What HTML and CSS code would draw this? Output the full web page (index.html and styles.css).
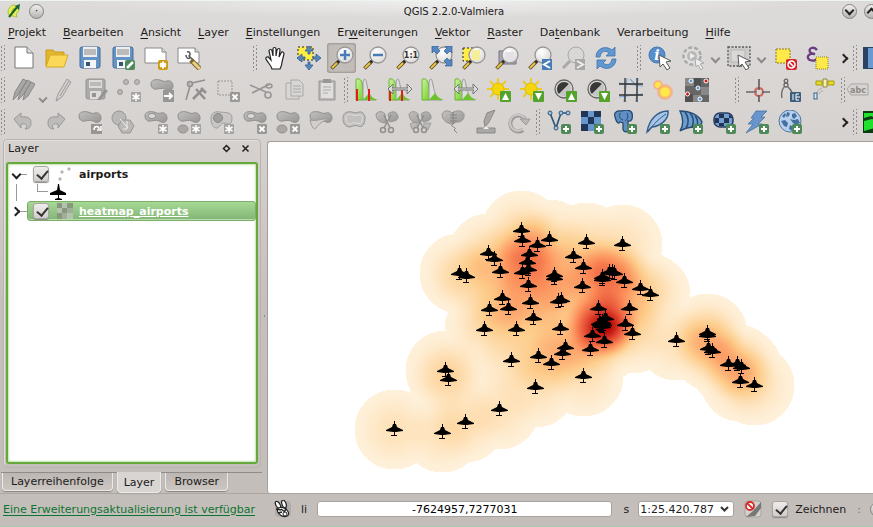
FILE: index.html
```html
<!DOCTYPE html>
<html lang="de">
<head>
    <meta charset="UTF-8">
    <meta name="viewport" content="width=device-width, initial-scale=1.0">
    <title>QGIS 2.2.0-Valmiera</title>
    <link rel="stylesheet" href="styles.css">
</head>
<body>

<!-- icon sprite -->
<svg class="sprite" width="0" height="0" aria-hidden="true">
    <defs>
        <linearGradient id="gGreen" x1="0" y1="0" x2="1" y2="1"><stop offset="0" stop-color="#cdf3a4"/><stop offset="1" stop-color="#6fd01c"/></linearGradient>
        <linearGradient id="gGrey" x1="0" y1="0" x2="1" y2="1"><stop offset="0" stop-color="#c2c0be"/><stop offset="1" stop-color="#989694"/></linearGradient>
        <radialGradient id="gGlass" cx=".4" cy=".3" r=".7"><stop offset="0" stop-color="#fff"/><stop offset="1" stop-color="#dddcda"/></radialGradient>
        <radialGradient id="gHeat"><stop offset=".5" stop-color="#ffe94a"/><stop offset=".7" stop-color="#fbb76a"/><stop offset="1" stop-color="#f4a08a" stop-opacity=".5"/></radialGradient>
    </defs>

    <!-- small parts shared by several icons -->
    <symbol id="b-plus" viewBox="0 0 24 24"><rect x="14" y="14" width="10" height="10" rx="2" fill="#4d8a57"/><path d="M19 16v6M16 19h6" stroke="#fff" stroke-width="2"/></symbol>
    <symbol id="b-star" viewBox="0 0 24 24"><rect x="14" y="14" width="10" height="10" rx="1" fill="#a5a3a1"/><path d="M19 15v8M15.500 17l7 4M22.500 17l-7 4" stroke="#fff" stroke-width="1.500"/></symbol>
    <symbol id="b-x" viewBox="0 0 24 24"><rect x="14" y="14" width="10" height="10" rx="1" fill="#9b9997"/><path d="M16.500 16.500l5 5M21.500 16.500l-5 5" stroke="#fff" stroke-width="1.800"/></symbol>
    <symbol id="b-up" viewBox="0 0 24 24"><rect x="13" y="13" width="11" height="11" rx="1" fill="#55a32a"/><path d="M18.500 15l3.500 7h-7z" fill="#fff"/></symbol>
    <symbol id="b-down" viewBox="0 0 24 24"><rect x="13" y="13" width="11" height="11" rx="1" fill="#55a32a"/><path d="M18.500 22l3.500-7h-7z" fill="#fff"/></symbol>
    <symbol id="blob" viewBox="0 0 24 24"><path d="M1 6C1 2 5 1 10 2c3 1 4 2 7 1 4-1 6 2 6 5 0 4-3 5-6 4-3-2-6-2-10-1C3 12 1 9 1 6z" fill="url(#gGrey)" stroke="#918f8d"/></symbol>
    <symbol id="lens" viewBox="0 0 24 24"><path d="M1.500 22.500l7-7" stroke="#53482c" stroke-width="3.500"/><path d="M2 22l5-5" stroke="#f1c540" stroke-width="2"/><path d="M8 16l2-2" stroke="#222" stroke-width="3"/><circle cx="15" cy="9" r="8" fill="url(#gGlass)" stroke="#989694" stroke-width="1.300"/></symbol>
    <symbol id="cursor" viewBox="0 0 24 24"><path d="M11 9l1 12 3-3 4 6 3-2-4-6 5-1z" fill="#fff" stroke="#555" stroke-width="1"/></symbol>

    <symbol id="logo" viewBox="0 0 16 16"><path d="M8 2C5 2 2 6 2 9c0 3 2 4 5 4 1 0 2 1 4 1l-1-3c2-1 3-4 3-6z" fill="#e6ef5c" stroke="#a9c02f"/><path d="M6 10c0-2 1-4 3-5" fill="none" stroke="#a9c02f" stroke-width="1.500"/><path d="M12 3L3 14" stroke="#17652d" stroke-width="2"/><path d="M14 1L9 3l4 4z" fill="#17652d"/></symbol>

    <!-- file -->
    <symbol id="new" viewBox="0 0 24 24"><path d="M3 1h12l6 6v15H3z" fill="#fff" stroke="#777"/><path d="M15 1v6h6" fill="#ddd" stroke="#777"/></symbol>
    <symbol id="open" viewBox="0 0 24 24"><path d="M1 20V4h7l2 2h9v5" fill="#e3b62c" stroke="#c89a1c"/><path d="M1 21L5 9h18l-4 12z" fill="#fcd858" stroke="#d8a827"/></symbol>
    <symbol id="save" viewBox="0 0 24 24"><rect x="2" y="1" width="20" height="21" rx="2" fill="#6493c8" stroke="#426b9b"/><path d="M5 1h14v10H5z" fill="#eee"/><path d="M6 4h12M6 6h12M6 8h12" stroke="#888"/><path d="M6 14h12v8H6z" fill="#f4f4f4"/><path d="M8 16h4v4H8z" fill="#31557f"/></symbol>
    <symbol id="saveas" viewBox="0 0 24 24"><use href="#save"/><rect x="14" y="14" width="10" height="10" rx="2" fill="#4d8a57"/><path d="M16 22l6-6" stroke="#fff" stroke-width="2.500"/></symbol>
    <symbol id="composer" viewBox="0 0 24 24"><path d="M1 2h17l4 4v11H1z" fill="#fff" stroke="#888"/><path d="M18 2v4h4" fill="#ddd" stroke="#888"/><rect x="14" y="14" width="10" height="10" rx="2" fill="#c99c14"/><path d="M19 15.500v7M16 17.500l6 3M22 17.500l-6 3" stroke="#fff" stroke-width="2"/></symbol>
    <symbol id="manager" viewBox="0 0 24 24"><path d="M1 2h17l4 4v11H1z" fill="#fff" stroke="#888"/><path d="M18 2v4h4" fill="#ddd" stroke="#888"/><path d="M10 6c3-1 4 2 2 4l4 4M9 9c0 3 2 4 4 3" fill="none" stroke="#555" stroke-width="1.500"/><path d="M14 14l9 9" stroke="#7b6430" stroke-width="5"/><path d="M16 16l7 7" stroke="#ecd084" stroke-width="3"/></symbol>

    <!-- navigation -->
    <symbol id="hand" viewBox="0 0 24 24"><path d="M8 23c-1-4-4-6-6-10-1-2 2-3 3-1l2 2L5 5c0-2 3-2 3 0l1 5V3c0-2 3-2 3 0v7l1-6c1-2 3-2 3 0l-1 7 2-4c1-2 3-1 3 1l-2 8c0 3-1 5-2 7z" fill="#fff" stroke="#222" stroke-width="1.200"/></symbol>
    <symbol id="pansel" viewBox="0 0 24 24"><rect x="1" y="1" width="15" height="13" fill="#ffec45" stroke="#222" stroke-dasharray="2 2"/><path d="M12 0l4 5h-3v3h-2V5H8zM12 24l4-5h-3v-3h-2v3H8zM0 12l5-4v3h3v2H5v3zM24 12l-5-4v3h-3v2h3v3z" fill="#5688c0" stroke="#315e93" stroke-width=".8"/></symbol>
    <symbol id="zin" viewBox="0 0 24 24"><use href="#lens"/><path d="M15 4v10M10 9h10" stroke="#4a7db8" stroke-width="2.500"/></symbol>
    <symbol id="zout" viewBox="0 0 24 24"><use href="#lens"/><path d="M10 9h10" stroke="#4a7db8" stroke-width="2.500"/></symbol>
    <symbol id="z11" viewBox="0 0 24 24"><use href="#lens"/><text x="15" y="12" text-anchor="middle" class="t-11">1:1</text></symbol>
    <symbol id="zfull" viewBox="0 0 24 24"><use href="#lens"/><path d="M3 0h7L8 2l3 3-3 3-3-3-2 2zM23 0h-7l2 2-3 3 3 3 3-3 2 2zM23 20h-7l2-2-3-3 3-3 3 3 2-2z" fill="#5688c0" stroke="#315e93" stroke-width=".7"/></symbol>
    <symbol id="zsel" viewBox="0 0 24 24"><rect x="1" y="2" width="14" height="13" fill="#ffec45" stroke="#222" stroke-dasharray="2 2"/><use href="#lens"/><path d="M9 4h9v10h-8z" fill="#f5ee9d"/></symbol>
    <symbol id="zlayer" viewBox="0 0 24 24"><path d="M4 5h17v13H4z" fill="#aaa6b7" stroke="#777287"/><use href="#lens"/><path d="M10 6h9v8h-9z" fill="#e3e1e7"/></symbol>
    <symbol id="zlast" viewBox="0 0 24 24"><use href="#lens"/><path d="M14 13h10v11H14z" fill="#467db7"/><path d="M22 15l-6 3.500 6 3.500" fill="none" stroke="#fff" stroke-width="2"/></symbol>
    <symbol id="znext" viewBox="0 0 24 24"><path d="M2 22l7-7" stroke="#aaa8a6" stroke-width="3"/><circle cx="15" cy="9" r="8" fill="#d9d7d5" stroke="#aaa8a6"/><path d="M14 13h10v11H14z" fill="#aaa8a6"/><path d="M16 15l6 3.500-6 3.500" fill="none" stroke="#eee" stroke-width="2"/></symbol>
    <symbol id="refresh" viewBox="0 0 24 24"><path d="M2 11C2 2 12-1 18 4l3-3v9h-9l3-3c-4-3-8-2-9 4z" fill="#6397cf" stroke="#3d73ad" stroke-width=".8"/><path d="M22 13c0 9-10 12-16 7l-3 3v-9h9l-3 3c4 3 8 2 9-4z" fill="#6397cf" stroke="#3d73ad" stroke-width=".8"/></symbol>

    <!-- attributes -->
    <symbol id="info" viewBox="0 0 24 24"><circle cx="9" cy="9" r="8" fill="#588ec9" stroke="#4379b3"/><text x="9" y="14" text-anchor="middle" class="t-info">i</text><use href="#cursor"/></symbol>
    <symbol id="action" viewBox="0 0 24 24"><circle cx="11" cy="10" r="8.500" fill="#ddd" stroke="#aaa" stroke-width="2.500" stroke-dasharray="4 2"/><circle cx="11" cy="10" r="5" fill="#bbb9b7"/><path d="M9 7l5 3-5 3z" fill="#eee"/><path d="M14 12l1 9 2-2 3 5 2-2-3-4 4-1z" fill="#eee" stroke="#aaa"/></symbol>
    <symbol id="select" viewBox="0 0 24 24"><rect x="1" y="1" width="22" height="19" fill="#cfcdcb" stroke="#555" stroke-width="1.300" stroke-dasharray="2 1.500"/><rect x="4" y="4" width="14" height="12" fill="#dad8d6" stroke="#b7b5b3"/><use href="#cursor"/></symbol>
    <symbol id="desel" viewBox="0 0 24 24"><rect x="3" y="3" width="14" height="14" fill="#ffe94a" stroke="#8e7f1d" stroke-dasharray="2 1"/><rect x="13" y="13" width="11" height="11" rx="2" fill="#d5262b"/><circle cx="18.500" cy="18.500" r="3.500" fill="none" stroke="#fff" stroke-width="1.500"/><path d="M16 16l5 5" stroke="#fff" stroke-width="1.500"/></symbol>
    <symbol id="expr" viewBox="0 0 24 24"><path d="M11 4C8 0 2 2 4 6c1 2 3 2 5 2-4-1-8 1-7 4s7 4 10 0" fill="none" stroke="#6b3c80" stroke-width="2.300"/><rect x="10" y="11" width="12" height="12" fill="#ffe94a" stroke="#8e7f1d" stroke-dasharray="1 1"/></symbol>
    <symbol id="table" viewBox="0 0 24 24"><path d="M0 1h24v22H0z" fill="#2a4264"/><path d="M5 2h19v20H5z" fill="#6b9ad2"/></symbol>

    <!-- digitizing -->
    <symbol id="pencils" viewBox="0 0 24 24"><path d="M1 22l2-8 8-13 4 2-9 14zM6 22l2-8 7-12 4 2-8 13zM11 22l2-8 6-10 4 2-7 12z" fill="#a9a7a5" stroke="#8b8987"/></symbol>
    <symbol id="pencil" viewBox="0 0 24 24"><path d="M5 23l2-7 9-15 4 3-9 15z" fill="#d0cecc" stroke="#a09e9c"/><path d="M9 18l9-15M5 23l3-2" stroke="#a09e9c"/></symbol>
    <symbol id="saveedit" viewBox="0 0 24 24"><rect x="2" y="1" width="19" height="20" rx="2" fill="#adabaa" stroke="#969492"/><path d="M5 2h13v8H5z" fill="#dedcda"/><path d="M6 5h11M6 7h11" stroke="#999"/><path d="M6 13h11v8H6z" fill="#dedcda"/><path d="M8 15h4v4H8zM13 22l8-11 3 2-8 9z" fill="#969492"/></symbol>
    <symbol id="addpt" viewBox="0 0 24 24"><g fill="#bbb9b7" stroke="#989694"><circle cx="9" cy="4" r="2.500"/><circle cx="20" cy="4" r="2.500"/><circle cx="3" cy="14" r="2.500"/></g><use href="#b-star"/></symbol>
    <symbol id="movef" viewBox="0 0 24 24"><use href="#blob"/><rect x="13" y="12" width="11" height="12" fill="#989694"/><path d="M14 18h8M19 15l3 3-3 3" fill="none" stroke="#fff" stroke-width="1.800"/></symbol>
    <symbol id="node" viewBox="0 0 24 24"><g fill="none" stroke="#92908e" stroke-width="1.500"><path d="M3 22L7 8M9 5l13-3"/><circle cx="7" cy="6" r="2.500" fill="#bbb"/><path d="M10 21l9-9M13 11l9 10M18 10l5 5" stroke-width="2.500"/></g></symbol>
    <symbol id="delsel" viewBox="0 0 24 24"><rect x="2" y="3" width="14" height="14" fill="none" stroke="#999795" stroke-dasharray="2 1"/><use href="#b-x"/></symbol>
    <symbol id="cut" viewBox="0 0 24 24"><g fill="none" stroke="#989694" stroke-width="1.600"><path d="M1 7l16 7M3 15l18-9"/><circle cx="19" cy="17" r="3"/><ellipse cx="20" cy="8" rx="3" ry="2"/></g></symbol>
    <symbol id="copy" viewBox="0 0 24 24"><g fill="#d9d7d5" stroke="#aaa8a6"><path d="M4 5h9l4 4v12H4z"/><path d="M9 2h8l4 4v12H9z"/><path d="M11 8h8M11 11h8M11 14h8"/></g></symbol>
    <symbol id="paste" viewBox="0 0 24 24"><path d="M4 3h16v19H4z" fill="#bbb9b7" stroke="#989694"/><path d="M6 5h12v15H6z" fill="#e1dfdd"/><path d="M8 1h8v4H8z" fill="#999795"/><path d="M8 9h8M8 12h8M8 15h5" stroke="#aaa"/></symbol>

    <!-- raster stretch -->
    <symbol id="hist" viewBox="0 0 24 24"><path d="M1 22V2q0-2 3-1c3 1 4 5 5 21z" fill="url(#gGreen)" stroke="#56a719" stroke-width=".8"/><path d="M8 22V5c1-6 3-5 4 2 2 10 4 14 9 15z" fill="#ddd" stroke="#999"/><path d="M8 22h15q-7-2-9-7z" fill="#6fc32a"/></symbol>
    <symbol id="histr" viewBox="0 0 24 24"><use href="#hist"/><path d="M2 11v12M14 11v12" stroke="#e81b1b" stroke-width="2"/></symbol>
    <symbol id="arrows" viewBox="0 0 24 24"><path d="M0 11l5-5v3l-1 1h16l-1-1V6l5 5-5 5v-3l1-1H4l1 1v3z" fill="#ddd" stroke="#777"/></symbol>
    <symbol id="histra" viewBox="0 0 24 24"><use href="#histr"/><use href="#arrows"/></symbol>
    <symbol id="hista" viewBox="0 0 24 24"><use href="#hist"/><use href="#arrows"/></symbol>
    <symbol id="sun" viewBox="0 0 24 24"><path d="M11 0v22M0 11h22M3 3l16 16M19 3L3 19" stroke="#ebcb22" stroke-width="1.800"/><circle cx="11" cy="11" r="6" fill="#f5d50c" stroke="#e1bd00"/></symbol>
    <symbol id="sunup" viewBox="0 0 24 24"><use href="#sun"/><use href="#b-up"/></symbol>
    <symbol id="sundown" viewBox="0 0 24 24"><use href="#sun"/><use href="#b-down"/></symbol>
    <symbol id="cont" viewBox="0 0 24 24"><circle cx="11" cy="11" r="9" fill="#d4d4d2" stroke="#666" stroke-width="1.300"/><path d="M16 6A7 7 0 1 0 6 16z" fill="#383838"/><path d="M16 6A7 7 0 0 1 6 16z" fill="#c4c4c2"/></symbol>
    <symbol id="contup" viewBox="0 0 24 24"><use href="#cont"/><use href="#b-up"/></symbol>
    <symbol id="contdown" viewBox="0 0 24 24"><use href="#cont"/><use href="#b-down"/></symbol>
    <symbol id="grid" viewBox="0 0 24 24"><path d="M8 0L5 24M19 0l-2 24M0 5l24 3M0 19l24-3M11 1l8 8" stroke="#79a5cd" stroke-width="1.200"/><path d="M6 0v24M18 0v24M0 6h24M0 17h24" stroke="#333" stroke-width="1.300"/></symbol>
    <symbol id="heat" viewBox="0 0 24 24"><circle cx="6" cy="7" r="5" fill="url(#gHeat)"/><circle cx="13" cy="14" r="8" fill="url(#gHeat)"/></symbol>
    <symbol id="interp" viewBox="0 0 24 24"><path d="M0 0h24v24H0z" fill="#666"/><path d="M0 0h9v8H0zM16 9h8v8h-8zM8 17h8v7H8z" fill="#888"/><path d="M9 0h7v9H9zM0 16h8v8H0z" fill="#505050"/><g stroke="#fff"><circle cx="6" cy="3" r="2" fill="#5a9ad3"/><circle cx="21" cy="3" r="2" fill="#d31414"/><circle cx="13" cy="10" r="2" fill="#5a9ad3"/><circle cx="2.500" cy="16" r="2" fill="#d31414"/><circle cx="15" cy="21" r="2" fill="#5a9ad3"/></g></symbol>
    <symbol id="cross" viewBox="0 0 24 24"><circle cx="13" cy="14" r="4" fill="none" stroke="#d2655e" stroke-width="2" stroke-dasharray="5 1.300"/><path d="M13 1v11M13 17v7M0 14h11M16 14h8" stroke="#333" stroke-width="1.200"/></symbol>
    <symbol id="capture" viewBox="0 0 24 24"><g fill="none" stroke="#666" stroke-width="1.300"><circle cx="7" cy="3" r="1.800"/><circle cx="7" cy="7" r="2"/><path d="M5 9c-2 3-3 7-2 11M9 9c3 3 4 4 4 7"/></g><rect x="11" y="14" width="11" height="10" rx="1" fill="#3c5f7e"/><path d="M14 16v6M20 16h-3v6h3M17 19h4" fill="none" stroke="#fff"/></symbol>
    <symbol id="gps" viewBox="0 0 24 24"><path d="M4 3h6v4H4zM16 3h6v4h-6z" fill="#e9da25" stroke="#a49a16"/><path d="M11 1h4v8h-4z" fill="#f6f1a5" stroke="#8d8840"/><path d="M10 10c-3 1-5 3-5 5M11 13c-2 0-3 1-4 3" fill="none" stroke="#aaa"/><rect x="2" y="15" width="3" height="6" fill="#d3eaf6" stroke="#396487"/></symbol>
    <symbol id="abc" viewBox="0 0 24 24"><path d="M0 11l4-5h17v11H4z" fill="#d6d4d2" stroke="#a7a5a3"/><text x="3" y="15" class="t-abc">abc</text></symbol>

    <!-- advanced digitizing -->
    <symbol id="undo" viewBox="0 0 24 24"><path d="M2 9l7-6v4c8-1 10 2 10 6 0 4-2 6-6 6 3-3 2-6-4-5v4z" fill="#bebcba" stroke="#9a9896"/></symbol>
    <symbol id="redo" viewBox="0 0 24 24"><path d="M20 9l-7-6v4C5 6 3 9 3 13c0 4 2 6 6 6-3-3-2-6 4-5v4z" fill="#bebcba" stroke="#9a9896"/></symbol>
    <symbol id="rotate" viewBox="0 0 24 24"><use href="#blob"/><path d="M13 14h11v10H13z" fill="#989694"/><path d="M16 20c0-5 5-4 5-1M19 20h4v-4" fill="none" stroke="#fff" stroke-width="1.500"/></symbol>
    <symbol id="simplify" viewBox="0 0 24 24"><g fill="#bbb9b7" stroke="#989694"><circle cx="8" cy="8" r="7"/><path d="M11 10h8l4 6-4 7h-8l-4-7z"/></g><path d="M9 9l8 9M16 11v8h-4" fill="none" stroke="#eee"/></symbol>
    <symbol id="ringadd" viewBox="0 0 24 24"><use href="#blob"/><ellipse cx="8" cy="6" rx="4" ry="2.500" fill="#dcdad8" stroke="#918f8d"/><use href="#b-star"/></symbol>
    <symbol id="partadd" viewBox="0 0 24 24"><use href="#blob"/><ellipse cx="6" cy="19" rx="5" ry="4" fill="#aaa8a6" stroke="#918f8d"/><use href="#b-star"/></symbol>
    <symbol id="fillring" viewBox="0 0 24 24"><path d="M1 8c0-5 4-7 9-6 4 1 12-1 12 6 0 8-4 6-8 5-4 0-5 6-8 5-4-1-5-5-5-10z" fill="#c9c7c5" stroke="#a09e9c"/><circle cx="8" cy="8" r="4.500" fill="#a09e9c" stroke="#8a8886"/><use href="#b-star"/></symbol>
    <symbol id="ringdel" viewBox="0 0 24 24"><use href="#blob"/><ellipse cx="8" cy="6" rx="4" ry="2.500" fill="#dcdad8" stroke="#918f8d"/><use href="#b-x"/></symbol>
    <symbol id="partdel" viewBox="0 0 24 24"><use href="#blob"/><ellipse cx="6" cy="19" rx="5" ry="4" fill="#aaa8a6" stroke="#918f8d"/><use href="#b-x"/></symbol>
    <symbol id="reshape" viewBox="0 0 24 24"><use href="#blob"/><path d="M1 10c8 2 12-3 20 0-5 0-9 1-14 8-3 3-5-4-6-8z" fill="#d2d0ce" stroke="#9d9b99"/></symbol>
    <symbol id="offset" viewBox="0 0 24 24"><path d="M1 8C1 3 5 1 10 2c3 1 4 1 7 0 4-1 6 3 6 6 0 7-3 10-7 8-3-1-5 0-8 1-5 0-7-4-7-9z" fill="#c2c0be" stroke="#999795"/><path d="M4 8c0-4 4-4 7-3 3 1 4 0 6 0 3-1 4 3 3 6s-3 3-6 2-5 1-7 1-3-3-3-6z" fill="none" stroke="#e2e0de"/></symbol>
    <symbol id="split" viewBox="0 0 24 24"><path d="M1 4c3-4 8-2 9 0l1 9c-7 0-10-4-10-9zM13 4c5-4 9-2 10 2s-3 5-8 6z" fill="url(#gGrey)" stroke="#989694"/><path d="M9 5l6 13M16 5L9 18" stroke="#918f8d" stroke-width="1.500"/><g fill="#d6d2cf" stroke="#918f8d" stroke-width="1.500"><circle cx="8" cy="20" r="2.500"/><circle cx="16" cy="20" r="2.500"/></g></symbol>
    <symbol id="splitp" viewBox="0 0 24 24"><path d="M2 14l6-3 2 7-6 1zM16 13h7l-3 7-5-1z" fill="#bbb9b7" stroke="#a4a2a0"/><use href="#split"/></symbol>
    <symbol id="merge" viewBox="0 0 24 24"><path d="M1 4c3-5 8-3 10-1 4-3 10-3 12 1 1 5-3 9-8 8l-3 2c-6 0-11-4-11-10z" fill="url(#gGrey)" stroke="#989694"/><path d="M12 2v12c-5 3 6 3 1 6l3 3M9 5h7M9 8h7M9 11h7" fill="none" stroke="#858381"/></symbol>
    <symbol id="mergea" viewBox="0 0 24 24"><path d="M10 11l3-8 8-3-6 12-4 5z" fill="#aaa8a6" stroke="#8a8886"/><path d="M3 18h18v5H3z" fill="#aaa8a6" stroke="#8a8886"/><path d="M9 19l3-3 3 3" fill="#eee"/></symbol>
    <symbol id="rotsym" viewBox="0 0 24 24"><path d="M16 20A8 8 0 1 1 18 9" fill="none" stroke="#9b9997" stroke-width="4"/><path d="M16 19A8 8 0 1 1 18 9" fill="none" stroke="#cac8c6" stroke-width="2"/><path d="M13 9h10l-4 6z" fill="#bab8b6" stroke="#9b9997"/></symbol>

    <!-- add layer -->
    <symbol id="vec" viewBox="0 0 24 24"><path d="M3 3l6 15 5-15h7" fill="none" stroke="#315879" stroke-width="1.700"/><g fill="#a7c4df" stroke="#315879"><circle cx="3" cy="3" r="2"/><circle cx="9" cy="18" r="2"/><circle cx="14" cy="3" r="2"/><circle cx="21" cy="3" r="2"/></g><use href="#b-plus"/></symbol>
    <symbol id="ras" viewBox="0 0 24 24"><path d="M1 1h20v20H1z" fill="#6797cd"/><path d="M1 1h7v6H1zM14 1h7v6h-7zM8 7h6v7H8zM1 14h7v7H1zM14 14h7v7h-7z" fill="#1f3659"/><use href="#b-plus"/></symbol>
    <symbol id="pg" viewBox="0 0 24 24"><path d="M2 3c2-3 5-2 7-2 2-1 8-2 10 2 1 5 0 9-4 8v9c-1 3-5 2-5-1v-6l-3-1c-1 2-3 1-4-2S1 5 2 3z" fill="#608fc4" stroke="#28496e" stroke-width="1.300"/><path d="M7 3c-1 4 0 6 3 7M14 3c2 4 0 7-2 8" fill="none" stroke="#28496e"/><use href="#b-plus"/></symbol>
    <symbol id="spatia" viewBox="0 0 24 24"><path d="M1 22C3 10 11 1 22 1c1 8-7 15-16 16z" fill="#a6c4e5" stroke="#335c89" stroke-width="1.400"/><path d="M2 22C8 13 14 8 20 4" fill="none" stroke="#335c89"/><use href="#b-plus"/></symbol>
    <symbol id="mssql" viewBox="0 0 24 24"><path d="M1 1c10 0 19 4 22 11-1 4-3 5-7 5-5 0-10 1-15 4 3-5 4-12 0-20z" fill="#6d9cce" stroke="#284c74" stroke-width="1.400"/><path d="M6 2c4 5 4 12 1 16M11 3c4 4 4 10 2 14M16 6c3 3 3 7 2 11" fill="none" stroke="#284c74" stroke-width="1.500"/><use href="#b-plus"/></symbol>
    <symbol id="ora" viewBox="0 0 24 24"><rect x="2" y="3" width="19" height="14" rx="6" fill="#779fd0" stroke="#243e61" stroke-width="1.500"/><path d="M7 4h5v4H7zM12 8h5v5h-5zM3 8h4v5H3zM7 13h5v3H7zM17 4l4 4h-4z" fill="#203657"/><use href="#b-plus"/></symbol>
    <symbol id="bolt" viewBox="0 0 24 24"><path d="M11 1h11l-6 6h4l-7 7h4L1 23l7-9H3l6-6H6z" fill="#6795cc" stroke="#4773a6" stroke-width=".8"/><use href="#b-plus"/></symbol>
    <symbol id="globe" viewBox="0 0 24 24"><circle cx="12" cy="11" r="11" fill="#b7d0ed" stroke="#54779e"/><path d="M4 6l3-3 1 2-2 3zM9 2l3 1-1 3-3 1zM14 4l3-1 2 3-3 3-2-2zM3 11l4-1 3 3-1 4-3-1zM12 9l4 1 4-1 2 4-4 2-3-2zM12 15l4 2-2 4-3-2z" fill="#46719e"/><use href="#b-plus"/></symbol>
    <symbol id="green" viewBox="0 0 24 24"><path d="M0 1h24v22H0z" fill="#0b3b12"/><path d="M1 3h23v4L14 9 8 6 1 8zM1 11l8-2 15 3v9h-9l-3-3-11 3z" fill="#21e12f"/></symbol>

    <symbol id="plane" viewBox="0 0 17 17"><path d="M8 0h1l1 6 6 3v2H9v3l3 1v1H5v-1l3-1v-3H0V9l7-3z"/></symbol>
    <symbol id="dots" viewBox="0 0 16 16"><g fill="#ddd" stroke="#999" stroke-width=".8"><circle cx="5" cy="6" r="1.200"/><circle cx="12" cy="3" r="1.200"/><circle cx="3" cy="13" r="1.200"/></g></symbol>
    <symbol id="raster" viewBox="0 0 16 16"><path d="M0 0h16v16H0z" fill="#b4c3ae"/><path d="M0 0h5v5H0zM10 0h6v5h-6zM5 5h5v5H5zM0 10h5v6H0z" fill="#87987f"/><path d="M10 5h6v5h-6zM5 10h5v6H5z" fill="#a0b098"/></symbol>
    <symbol id="mouse" viewBox="0 0 18 18"><rect x="1" y="1" width="16" height="16" rx="4" fill="#b1ada9"/><g fill="#fff" stroke="#222" stroke-width="1.200"><ellipse cx="4" cy="5" rx="2" ry="4" transform="rotate(-30 4 5)"/><ellipse cx="10" cy="4" rx="2" ry="4" transform="rotate(-20 10 4)"/><ellipse cx="9" cy="12" rx="6" ry="4" transform="rotate(30 9 12)"/></g><path d="M2 9l5 1M7 9l4 3M12 8l-1 3M4 13l4-1" stroke="#222" stroke-width="1.500"/><circle cx="11" cy="14" r="2" fill="#fff" stroke="#222"/></symbol>
    <symbol id="norender" viewBox="0 0 18 18"><rect x="1" y="1" width="16" height="16" rx="3" fill="#d4d0cc" stroke="#aaa5a0"/><path d="M17 2L9 11l-7 6 9-1 6-8z" fill="#777"/><circle cx="6" cy="6" r="4" fill="#fff" stroke="#d42a2a" stroke-width="1.800"/><path d="M3 3l6 6" stroke="#d42a2a" stroke-width="1.800"/></symbol>
</svg>

<header class="titlebar">
    <svg class="logo"><use href="#logo"/></svg>
    <button class="round" aria-label="Fenstermenü">·</button>
    <h1>QGIS 2.2.0-Valmiera</h1>
    <button class="round chev-down" aria-label="Minimieren"></button>
    <button class="round chev-up" aria-label="Maximieren"></button>
</header>

<nav class="menubar">
    <a href="#"><u>P</u>rojekt</a>
    <a href="#"><u>B</u>earbeiten</a>
    <a href="#"><u>A</u>nsicht</a>
    <a href="#"><u>L</u>ayer</a>
    <a href="#"><u>E</u>instellungen</a>
    <a href="#">Er<u>w</u>eiterungen</a>
    <a href="#"><u>V</u>ektor</a>
    <a href="#"><u>R</u>aster</a>
    <a href="#">Da<u>t</u>enbank</a>
    <a href="#">Verarbeitung</a>
    <a href="#"><u>H</u>ilfe</a>
</nav>

<div class="toolbars">
    <div class="row">
        <div class="toolbar spaced">
            <button class="tool" aria-label="Neu"><svg><use href="#new"/></svg></button>
            <button class="tool" aria-label="Öffnen"><svg><use href="#open"/></svg></button>
            <button class="tool" aria-label="Speichern"><svg><use href="#save"/></svg></button>
            <button class="tool" aria-label="Speichern als"><svg><use href="#saveas"/></svg></button>
            <button class="tool" aria-label="Neue Druckzusammenstellung"><svg><use href="#composer"/></svg></button>
            <button class="tool" aria-label="Druckzusammenstellungen"><svg><use href="#manager"/></svg></button>
        </div>
        <div class="toolbar ends">
            <button class="tool" aria-label="Karte verschieben"><svg><use href="#hand"/></svg></button>
            <button class="tool" aria-label="Zur Auswahl verschieben"><svg><use href="#pansel"/></svg></button>
            <button class="tool active" aria-label="Hineinzoomen"><svg><use href="#zin"/></svg></button>
            <button class="tool" aria-label="Hinauszoomen"><svg><use href="#zout"/></svg></button>
            <button class="tool" aria-label="Auf native Auflösung zoomen"><svg><use href="#z11"/></svg></button>
            <button class="tool" aria-label="Volle Ausdehnung"><svg><use href="#zfull"/></svg></button>
            <button class="tool" aria-label="Auf Auswahl zoomen"><svg><use href="#zsel"/></svg></button>
            <button class="tool" aria-label="Auf Layer zoomen"><svg><use href="#zlayer"/></svg></button>
            <button class="tool" aria-label="Zoom zurück"><svg><use href="#zlast"/></svg></button>
            <button class="tool" aria-label="Zoom vor" disabled><svg><use href="#znext"/></svg></button>
            <button class="tool" aria-label="Aktualisieren"><svg><use href="#refresh"/></svg></button>
        </div>
        <div class="toolbar fill">
            <button class="tool" aria-label="Objekte abfragen"><svg><use href="#info"/></svg></button>
            <button class="tool" aria-label="Aktion ausführen" disabled><svg><use href="#action"/></svg></button>
            <button class="drop" aria-label="Aktionen"></button>
            <button class="tool" aria-label="Objekte wählen"><svg><use href="#select"/></svg></button>
            <button class="drop" aria-label="Auswahlarten"></button>
            <button class="tool" aria-label="Auswahl aufheben"><svg><use href="#desel"/></svg></button>
            <button class="tool" aria-label="Nach Ausdruck wählen"><svg><use href="#expr"/></svg></button>
            <button class="more" aria-label="Mehr"></button>
        </div>
        <div class="toolbar last">
            <button class="tool" aria-label="Attributtabelle"><svg><use href="#table"/></svg></button>
        </div>
    </div>

    <div class="row">
        <div class="toolbar">
            <button class="tool" aria-label="Aktuelle Änderungen"><svg><use href="#pencils"/></svg></button>
            <button class="drop tight" aria-label="Änderungen"></button>
            <button class="tool" aria-label="Bearbeitungsstatus"><svg><use href="#pencil"/></svg></button>
            <button class="tool" aria-label="Layeränderungen speichern"><svg><use href="#saveedit"/></svg></button>
            <button class="tool" aria-label="Objekt hinzufügen"><svg><use href="#addpt"/></svg></button>
            <button class="tool" aria-label="Objekt verschieben"><svg><use href="#movef"/></svg></button>
            <button class="tool" aria-label="Knotenwerkzeug"><svg><use href="#node"/></svg></button>
            <button class="tool" aria-label="Ausgewähltes löschen"><svg><use href="#delsel"/></svg></button>
            <button class="tool" aria-label="Ausschneiden"><svg><use href="#cut"/></svg></button>
            <button class="tool" aria-label="Kopieren"><svg><use href="#copy"/></svg></button>
            <button class="tool" aria-label="Einfügen"><svg><use href="#paste"/></svg></button>
        </div>
        <div class="toolbar fill">
            <button class="tool" aria-label="Lokale Kumulation"><svg><use href="#histr"/></svg></button>
            <button class="tool" aria-label="Volle Kumulation"><svg><use href="#histra"/></svg></button>
            <button class="tool" aria-label="Lokale Streckung"><svg><use href="#hist"/></svg></button>
            <button class="tool" aria-label="Volle Streckung"><svg><use href="#hista"/></svg></button>
            <button class="tool" aria-label="Helligkeit erhöhen"><svg><use href="#sunup"/></svg></button>
            <button class="tool" aria-label="Helligkeit verringern"><svg><use href="#sundown"/></svg></button>
            <button class="tool" aria-label="Kontrast erhöhen"><svg><use href="#contup"/></svg></button>
            <button class="tool" aria-label="Kontrast verringern"><svg><use href="#contdown"/></svg></button>
            <button class="tool" aria-label="Georeferenzierung"><svg><use href="#grid"/></svg></button>
            <button class="tool" aria-label="Heatmap"><svg><use href="#heat"/></svg></button>
            <button class="tool" aria-label="Interpolation"><svg><use href="#interp"/></svg></button>
        </div>
        <div class="toolbar">
            <button class="tool" aria-label="Koordinaten"><svg><use href="#cross"/></svg></button>
            <button class="tool" aria-label="Koordinatenerfassung"><svg><use href="#capture"/></svg></button>
            <button class="tool" aria-label="GPS"><svg><use href="#gps"/></svg></button>
        </div>
        <div class="toolbar wide">
            <button class="tool" aria-label="Beschriftung"><svg><use href="#abc"/></svg></button>
        </div>
    </div>

    <div class="row">
        <div class="toolbar">
            <button class="tool" aria-label="Rückgängig"><svg><use href="#undo"/></svg></button>
            <button class="tool" aria-label="Wiederholen"><svg><use href="#redo"/></svg></button>
            <button class="tool" aria-label="Objekte drehen"><svg><use href="#rotate"/></svg></button>
            <button class="tool" aria-label="Vereinfachen"><svg><use href="#simplify"/></svg></button>
            <button class="tool" aria-label="Ring hinzufügen"><svg><use href="#ringadd"/></svg></button>
            <button class="tool" aria-label="Teil hinzufügen"><svg><use href="#partadd"/></svg></button>
            <button class="tool" aria-label="Ring füllen"><svg><use href="#fillring"/></svg></button>
            <button class="tool" aria-label="Ring löschen"><svg><use href="#ringdel"/></svg></button>
            <button class="tool" aria-label="Teil löschen"><svg><use href="#partdel"/></svg></button>
            <button class="tool" aria-label="Überarbeiten"><svg><use href="#reshape"/></svg></button>
            <button class="tool" aria-label="Linie versetzen"><svg><use href="#offset"/></svg></button>
            <button class="tool" aria-label="Objekte trennen"><svg><use href="#split"/></svg></button>
            <button class="tool" aria-label="Teile trennen"><svg><use href="#splitp"/></svg></button>
            <button class="tool" aria-label="Verschmelzen"><svg><use href="#merge"/></svg></button>
            <button class="tool" aria-label="Attribute vereinigen"><svg><use href="#mergea"/></svg></button>
            <button class="tool" aria-label="Symbole drehen"><svg><use href="#rotsym"/></svg></button>
        </div>
        <div class="toolbar fill">
            <button class="tool" aria-label="Vektorlayer"><svg><use href="#vec"/></svg></button>
            <button class="tool" aria-label="Rasterlayer"><svg><use href="#ras"/></svg></button>
            <button class="tool" aria-label="PostGIS"><svg><use href="#pg"/></svg></button>
            <button class="tool" aria-label="SpatiaLite"><svg><use href="#spatia"/></svg></button>
            <button class="tool" aria-label="MSSQL"><svg><use href="#mssql"/></svg></button>
            <button class="tool" aria-label="Oracle"><svg><use href="#ora"/></svg></button>
            <button class="tool" aria-label="SQL Anywhere"><svg><use href="#bolt"/></svg></button>
            <button class="tool" aria-label="WMS"><svg><use href="#globe"/></svg></button>
            <button class="more" aria-label="Mehr"></button>
        </div>
        <div class="toolbar last">
            <button class="tool" aria-label="GRASS"><svg><use href="#green"/></svg></button>
        </div>
    </div>
</div>

<main class="workspace">
    <aside class="dock">
        <section class="panel">
            <div class="panel-head">
                <h2>Layer</h2>
                <button aria-label="Abdocken"><svg viewBox="0 0 9 9"><path d="M4.500 1.500l3 3-3 3-3-3z"/></svg></button>
                <button aria-label="Schließen"><svg viewBox="0 0 9 9"><path d="M1.500 1.500l6 6M7.500 1.500l-6 6"/></svg></button>
            </div>
            <ul class="tree">
                <li class="layer">
                    <span class="branch open"></span>
                    <input type="checkbox" id="lyrAirports" checked>
                    <svg><use href="#dots"/></svg>
                    <label for="lyrAirports">airports</label>
                </li>
                <li class="symbol"><span class="elbow"></span><svg><use href="#plane"/></svg></li>
                <li class="layer">
                    <span class="branch"></span>
                    <div class="selected">
                        <input type="checkbox" id="lyrHeatmap" checked>
                        <svg><use href="#raster"/></svg>
                        <label for="lyrHeatmap">heatmap_airports</label>
                    </div>
                </li>
            </ul>
        </section>
        <div class="tabs">
            <button class="tab">Layerreihenfolge</button>
            <button class="tab current">Layer</button>
            <button class="tab">Browser</button>
        </div>
    </aside>
    <div class="splitter"></div>
    <div class="map" id="map"><canvas id="mapCanvas"></canvas></div>
</main>

<footer class="statusbar">
    <a href="#">Eine Erweiterungsaktualisierung ist verfügbar</a>
    <button class="mini" aria-label="Ausdehnung umschalten"><svg><use href="#mouse"/></svg></button>
    <label class="coord-label" for="coords">li</label>
    <input type="text" id="coords" value="-7624957,7277031">
    <label class="scale-label" for="scale">s</label>
    <select id="scale"><option>1:25.420.787</option></select>
    <button class="mini" aria-label="Zeichnen abbrechen"><svg><use href="#norender"/></svg></button>
    <input type="checkbox" id="render" checked>
    <label for="render">Zeichnen</label>
    <span class="dots">:</span>
    <button class="round" aria-label="Projektion"></button>
</footer>

<script src="map.js"></script>
</body>
</html>
```

FILE: styles.css
```css
* {
    box-sizing: border-box;
}
body {
    margin: 0;
    height: 100vh;
    display: flex;
    flex-direction: column;
    overflow: hidden;
    font-family: 'DejaVu Sans', sans-serif;
    font-size: 11px;
    color: #1c1b1a;
    background: linear-gradient(#dddbda, #d6d2d0 140px, #c6c0bc 300px, #c4beba);
    border-top: 1px solid #eef4ee;
    border-bottom: 1px solid #a5cbae;
}
button {
    border: none;
    padding: 0;
    background: none;
    font: inherit;
    color: inherit;
}
.sprite {
    position: absolute;
}
.t-11 {
    font: bold 8px 'DejaVu Sans', sans-serif;
    fill: #333;
}
.t-info {
    font: italic bold 14px 'DejaVu Serif', serif;
    fill: #fff;
}
.t-abc {
    font: bold 8px 'DejaVu Sans', sans-serif;
    fill: #8c8a88;
}

/* title and menu */
.titlebar {
    display: flex;
    align-items: center;
    gap: 7px;
    height: 20px;
    flex: none;
    padding-left: 6px;
    background: radial-gradient(ellipse at 50% 0, #eeeeee, rgba(238, 238, 238, 0) 60%);
}
.titlebar h1 {
    flex: 1;
    margin: 0;
    padding-left: 22px;
    text-align: center;
    font-size: 10px;
    font-weight: normal;
}
.logo {
    width: 16px;
    height: 16px;
}
.round {
    width: 15px;
    height: 15px;
    flex: none;
    border: 1px solid #858381;
    border-radius: 50%;
    background: linear-gradient(#f0f0ef, #b5b3b1);
    line-height: 12px;
    display: flex;
    align-items: center;
    justify-content: center;
}
.chev-down::before, .chev-up::before {
    content: "";
    width: 5px;
    height: 5px;
    border: solid #222;
    border-width: 0 2px 2px 0;
    transform: translateY(-1px) rotate(45deg);
}
.chev-up::before {
    transform: translateY(1px) rotate(225deg);
}
.chev-up {
    margin-right: -6px;
}
.menubar {
    display: flex;
    gap: 17px;
    height: 21px;
    flex: none;
    align-items: center;
    padding: 2px 0 0 8px;
}
.menubar a {
    color: inherit;
    text-decoration: none;
}
.menubar u {
    text-underline-offset: 2px;
}

/* toolbars */
.toolbars {
    flex: none;
}
.row {
    display: flex;
    height: 32px;
    overflow: hidden;
}
.toolbar {
    display: flex;
    flex: none;
    align-items: center;
}
.toolbar::before {
    content: "";
    width: 6px;
    height: 26px;
    flex: none;
    margin-right: 1px;
    background:
        radial-gradient(circle, #8e8b88 1px, transparent 1px) 0 0 / 3px 4px repeat-y,
        radial-gradient(circle, #8e8b88 1px, transparent 1px) 3px 2px / 3px 4px repeat-y;
}
.spaced {
    padding-right: 47px;
}
.ends {
    padding-right: 14px;
}
.fill {
    flex: 1 0 auto;
}
.last {
    width: 21px;
}
.wide {
    width: 33px;
}
.last .tool, .wide .tool {
    justify-content: flex-start;
}
.last .tool {
    padding-left: 4px;
}
.tool {
    width: 33px;
    height: 30px;
    flex: none;
    display: flex;
    align-items: center;
    justify-content: center;
}
.tool svg {
    width: 24px;
    height: 24px;
    flex: none;
    overflow: visible;
}
.active {
    background: #c2bdb9;
    box-shadow: inset 0 0 2px 1px #9b9692;
    border-radius: 3px;
    width: 29px;
    margin: 0 2px;
}
.drop {
    width: 13px;
    height: 24px;
    display: flex;
    align-items: center;
    justify-content: center;
}
.drop::before {
    content: "";
    width: 5px;
    height: 5px;
    border: solid #8d8a87;
    border-width: 0 2px 2px 0;
    transform: rotate(45deg);
}
.tight {
    width: 6px;
    align-items: flex-end;
}
.more {
    margin-left: auto;
    padding-right: 5px;
}
.more::before {
    content: "";
    display: block;
    width: 5px;
    height: 5px;
    border: solid #222;
    border-width: 2px 2px 0 0;
    transform: rotate(45deg);
}

/* layer dock */
.workspace {
    flex: 1;
    min-height: 0;
    display: flex;
}
.dock {
    width: 262px;
    flex: none;
    display: flex;
    flex-direction: column;
}
.panel {
    flex: 1;
    min-height: 0;
    margin: 1px 1px 4px 3px;
    padding: 0 2px 3px;
    border: 1px solid #b9b4b0;
    border-radius: 4px;
    box-shadow: inset 1px 1px #e2dfdd;
    display: flex;
    flex-direction: column;
}
.panel-head {
    height: 22px;
    flex: none;
    display: flex;
    align-items: center;
    gap: 10px;
    padding: 0 8px 6px 2px;
}
.panel-head h2 {
    flex: 1;
    margin: 0;
    font-size: 11px;
    font-weight: normal;
}
.panel-head button, .panel-head svg {
    width: 9px;
    height: 9px;
    display: block;
}
.panel-head path {
    fill: none;
    stroke: #222;
    stroke-width: 1.5;
}
.tree {
    flex: 1;
    margin: 0;
    padding: 0 0 0 4px;
    list-style: none;
    background: #fff;
    border: 2px solid #65a83c;
    border-radius: 3px;
    box-shadow: inset 0 0 2px 1px #c4e3b0;
    font-weight: bold;
}
.layer, .selected {
    display: flex;
    align-items: center;
    height: 20px;
}
.layer input {
    margin-left: 6px;
    margin-right: 8px;
}
.selected {
    flex: 1;
    border: 1px solid #7cb069;
    border-radius: 3px;
    background: linear-gradient(#a5d994, #83b477);
    box-shadow: inset 0 -1px #b7deaa;
    color: #fff;
    text-decoration: underline;
}
.selected input {
    margin-left: 5px;
}
.layer svg {
    width: 16px;
    height: 16px;
    margin-right: 6px;
}
.branch {
    width: 15px;
    height: 20px;
    display: flex;
    align-items: center;
    background: linear-gradient(#999, #999) 9px 10px / 6px 1px no-repeat;
}
.branch::before {
    content: "";
    width: 5px;
    height: 5px;
    border: solid #222;
    border-width: 2px 2px 0 0;
    transform: rotate(45deg);
}
.branch.open::before {
    margin-left: 1px;
    transform: rotate(135deg);
}
.symbol {
    display: flex;
    height: 17px;
    margin-left: 4px;
    border-left: 1px solid #999;
}
.symbol svg {
    width: 17px;
    height: 17px;
    margin-left: 2px;
}
.elbow {
    width: 11px;
    height: 8px;
    margin-left: 20px;
    border-left: 1px solid #999;
    border-bottom: 1px solid #999;
}
input[type="checkbox"] {
    appearance: none;
    width: 16px;
    height: 16px;
    flex: none;
    margin-top: 0;
    margin-bottom: 0;
    border: 1px solid #aaa6a2;
    border-radius: 3px;
    background: linear-gradient(#efedec, #d2cecb);
    box-shadow: 0 1px 1px #8a8785;
}
input[type="checkbox"]:checked::before {
    content: "";
    display: block;
    width: 5px;
    height: 9px;
    margin: 1px 0 0 5px;
    border: solid #333;
    border-width: 0 2px 2px 0;
    transform: rotate(40deg);
}
.tabs {
    height: 20px;
    margin: 0 0 1px 1px;
    flex: none;
    display: flex;
    gap: 4px;
    padding-left: 1px;
    border-top: 1px solid #8f8b88;
}
.tab {
    height: 18px;
    padding: 0 8px;
    border: 1px solid #eceae8;
    border-top: none;
    border-radius: 0 0 4px 4px;
    background: linear-gradient(#bcb7b3, #cbc6c2);
    box-shadow: 0 1px 1px #85817e;
}
.tab.current {
    height: 21px;
    padding: 0 6px;
    margin-top: -1px;
    background: #d9d5d2;
}
.splitter {
    width: 5px;
    flex: none;
    background: radial-gradient(circle, #8e8b88 1px, transparent 1px) center / 3px 4px no-repeat;
}
.map {
    flex: 1;
    min-width: 0;
    margin-top: 3px;
    overflow: hidden;
    background: #fff;
    border: solid #a39e9a;
    border-width: 1px 0 0 1px;
    border-radius: 3px 0 0 3px;
}
.map canvas {
    display: block;
}

/* status bar */
.statusbar {
    height: 33px;
    flex: none;
    display: flex;
    align-items: center;
    padding: 0 0 2px 3px;
    border-top: 1px solid #aca7a3;
    overflow: hidden;
    white-space: nowrap;
}
.statusbar a {
    width: 261px;
    flex: none;
    color: #0c7431;
    text-underline-offset: 2px;
}
.mini, .mini svg {
    width: 18px;
    height: 18px;
    flex: none;
    display: block;
}
.mini {
    margin-left: 10px;
}
.coord-label {
    margin: 0 10px 0 9px;
}
.statusbar input[type="text"] {
    flex: 1;
    min-width: 0;
    height: 16px;
    padding: 0;
    text-align: center;
    font: inherit;
    border: 1px solid #a8a39f;
    border-radius: 3px;
    background: #fff;
}
.scale-label {
    margin: 0 9px 0 11px;
}
.statusbar select {
    appearance: none;
    width: 96px;
    height: 16px;
    flex: none;
    padding: 0 0 0 1px;
    font: inherit;
    color: inherit;
    border: 1px solid #a8a39f;
    border-radius: 3px;
    background: #fff url("data:image/svg+xml,%3Csvg xmlns='http://www.w3.org/2000/svg' width='9' height='6'%3E%3Cpath d='M1 1l3.500 3.500L8 1' fill='none' stroke='%23333' stroke-width='2'/%3E%3C/svg%3E") right 4px center no-repeat;
}
.statusbar input[type="checkbox"] {
    margin: 0 7px 0 10px;
}
.statusbar .dots {
    margin: 0 9px 0 11px;
    color: #77736f;
}
.statusbar .round {
    margin-right: -12px;
}
```

FILE: map.js
```js
// airport positions in map pixels
const airports = [
    [253, 88], [254, 98], [269, 103], [281, 97], [220, 111], [226, 117], [232, 129],
    [191, 131], [198, 134], [261, 112], [259, 120], [260, 127], [254, 130], [260, 143],
    [234, 156], [221, 167], [240, 166], [262, 160], [265, 176], [286, 133], [286, 136],
    [305, 114], [290, 159], [293, 158], [216, 187], [248, 187], [292, 186],
    [318, 100], [354, 102], [315, 125], [314, 144], [334, 135], [334, 137], [341, 130],
    [344, 130], [346, 131], [356, 139], [372, 146], [382, 152], [330, 166], [361, 166],
    [357, 182], [337, 176], [334, 180], [332, 182], [334, 184], [364, 191], [324, 193],
    [336, 199], [322, 207], [297, 205], [294, 211], [283, 221], [315, 234],
    [331, 181], [335, 182], [333, 183],
    [408, 198], [439, 191], [439, 193], [440, 206], [444, 209], [460, 222], [469, 222],
    [473, 225], [472, 239], [486, 243],
    [177, 228], [180, 237], [126, 287], [174, 290], [197, 280], [231, 267],
    [243, 218], [270, 214], [267, 245]
];

const RADIUS = 40;
const ramp = [[254, 240, 217], [253, 204, 138], [252, 141, 89], [227, 74, 51], [179, 0, 0]];

function rampColor(t) {
    const pos = Math.min(t, 1) * (ramp.length - 1);
    const i = Math.min(Math.floor(pos), ramp.length - 2);
    return ramp[i].map((c, k) => c + (ramp[i + 1][k] - c) * (pos - i));
}

function drawHeatmap(ctx, w, h) {
    const density = new Float32Array(w * h);
    let max = 0;
    for (const [px, py] of airports) {
        for (let y = Math.max(0, py - RADIUS); y < Math.min(h, py + RADIUS); y++) {
            for (let x = Math.max(0, px - RADIUS); x < Math.min(w, px + RADIUS); x++) {
                const d = ((x - px) ** 2 + (y - py) ** 2) / (RADIUS * RADIUS);
                if (d < 1) {
                    density[y * w + x] += (1 - d) ** 2;
                    max = Math.max(max, density[y * w + x]);
                }
            }
        }
    }
    const img = ctx.createImageData(w, h);
    density.forEach((v, i) => {
        if (v > 0) {
            img.data.set([...rampColor(v / max), 255], i * 4);
        }
    });
    ctx.putImageData(img, 0, 0);
}

function drawPlane(ctx, x, y) {
    ctx.fillRect(x, y - 8, 1, 15);
    ctx.fillRect(x - 3, y + 6, 6, 1);
    ctx.beginPath();
    ctx.moveTo(x - 1, y - 5);
    ctx.lineTo(x + 2, y - 5);
    ctx.lineTo(x + 3, y - 2);
    ctx.lineTo(x + 9, y + 1);
    ctx.lineTo(x + 9, y + 2);
    ctx.lineTo(x + 2, y + 3);
    ctx.lineTo(x - 1, y + 3);
    ctx.lineTo(x - 8, y + 2);
    ctx.lineTo(x - 8, y + 1);
    ctx.lineTo(x - 2, y - 2);
    ctx.fill();
}

function drawMap() {
    const map = document.getElementById("map");
    const canvas = document.getElementById("mapCanvas");
    canvas.width = map.clientWidth;
    canvas.height = map.clientHeight;
    const ctx = canvas.getContext("2d");
    drawHeatmap(ctx, canvas.width, canvas.height);
    ctx.fillStyle = "#000";
    airports.forEach(([x, y]) => drawPlane(ctx, x, y));
}

window.addEventListener("resize", drawMap);
drawMap();
```
